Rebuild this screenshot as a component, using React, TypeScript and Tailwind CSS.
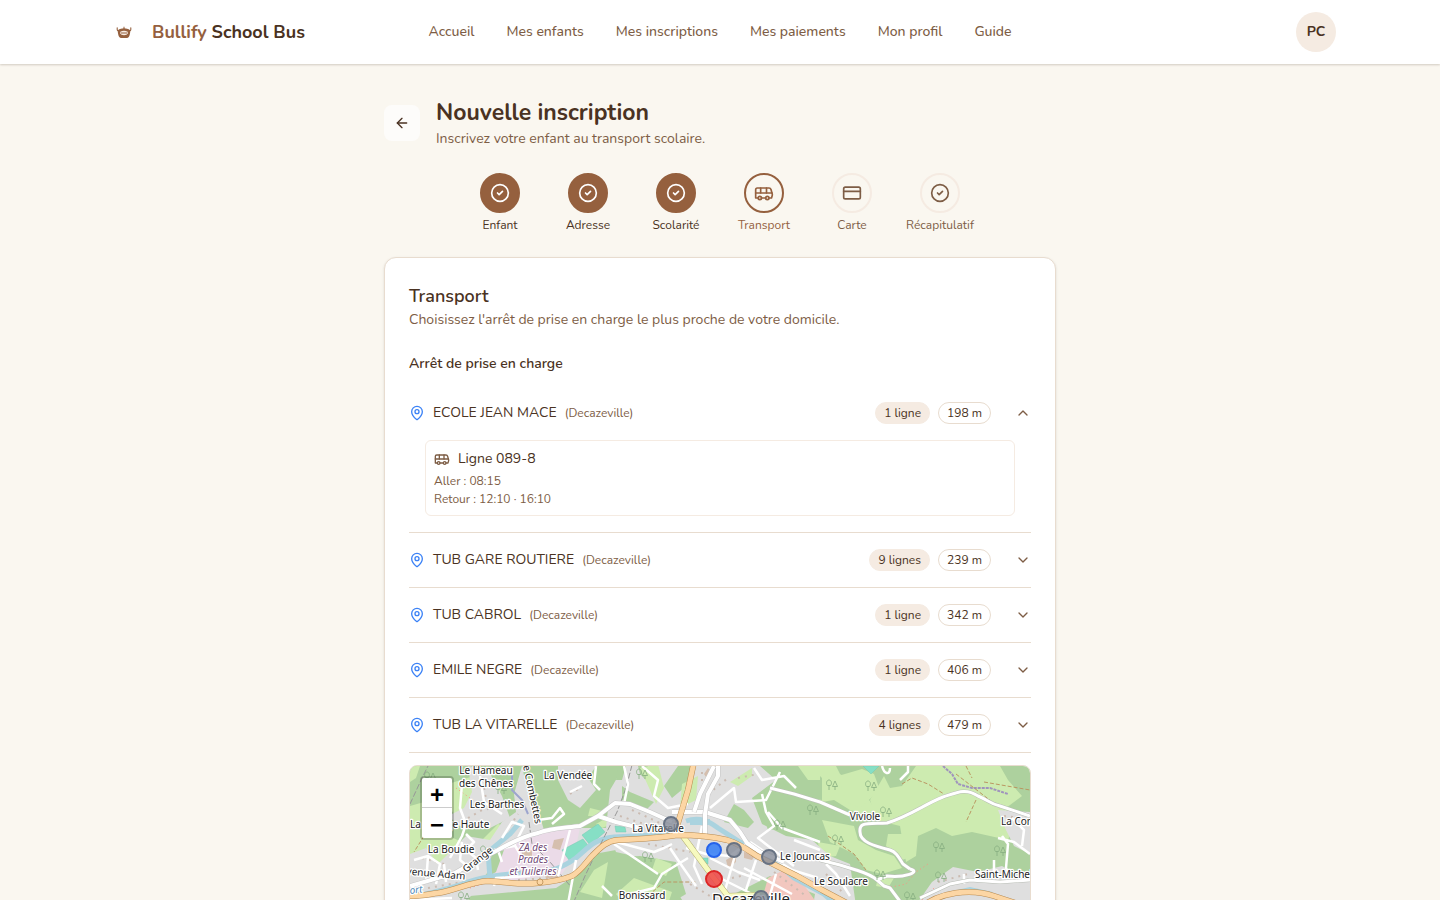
import { useState } from "react";
import { ArrowLeft, Bus, ChevronDown, CircleCheck, CreditCard, MapPin } from "lucide-react";

const navItems = ["Accueil", "Mes enfants", "Mes inscriptions", "Mes paiements", "Mon profil", "Guide"];

const steps = [
  { label: "Enfant", state: "done", Icon: CircleCheck },
  { label: "Adresse", state: "done", Icon: CircleCheck },
  { label: "Scolarité", state: "done", Icon: CircleCheck },
  { label: "Transport", state: "current", Icon: Bus },
  { label: "Carte", state: "todo", Icon: CreditCard },
  { label: "Récapitulatif", state: "todo", Icon: CircleCheck },
];

const circleStyles: Record<string, string> = {
  done: "border-[#95603e] bg-[#95603e] text-white",
  current: "border-[#95603e] text-[#95603e]",
  todo: "border-[#f5ebe2] text-[#7d5d45]",
};

const labelStyles: Record<string, string> = {
  done: "text-[#4a3222]",
  current: "text-[#95603e]",
  todo: "text-[#7d5d45]",
};

const stops = [
  { name: "ECOLE JEAN MACE", town: "Decazeville", lines: "1 ligne", distance: "198 m" },
  { name: "TUB GARE ROUTIERE", town: "Decazeville", lines: "9 lignes", distance: "239 m" },
  { name: "TUB CABROL", town: "Decazeville", lines: "1 ligne", distance: "342 m" },
  { name: "EMILE NEGRE", town: "Decazeville", lines: "1 ligne", distance: "406 m" },
  { name: "TUB LA VITARELLE", town: "Decazeville", lines: "4 lignes", distance: "479 m" },
];

const mainRoad = "M0 130C10 130 20 128 28 127C46 124 60 116 78 115C96 116 110 119 128 117C140 116 152 114 162 110C172 104 176 96 182 90C190 82 196 75 208 74C230 73 250 72 267 69C284 69 300 70 317 74C330 78 338 84 347 90L387 110L412 124L446 142M268 69V57L278 24L284 -4M510 142C530 126 560 122 584 130L620 142";
const connectors = "M0 120L45 107C60 98 74 91 88 84C102 76 114 70 128 67C140 62 154 62 170 60L188 50L205 37L220 38L240 46L262 56M188 50L206 56L230 62M262 46L295 46L320 54L330 66L337 77L350 86L374 96";
const ruralRoads = "M360 22L384 28L410 36L440 49M500 103L493 98C488 90 486 86 480 84C464 80 450 76 450 66C449 56 456 58 477 57C500 50 515 38 533 31C548 26 556 22 568 30C578 34 580 38 590 40L620 50M500 103C512 106 494 112 477 110L467 114C460 108 452 106 446 104L430 99L410 94M467 114L474 120L480 122L492 138M510 132L540 118L560 114L590 116L620 114";

function Logo() {
  return (
    <svg viewBox="0 0 16 14" className="h-3.5 w-4" aria-hidden="true">
      <path d="M1.200 2.700V4.500C1.200 5.400 1.800 5.800 2.600 5.500C4.200 4.200 6 3.900 8 3.900S11.800 4.200 13.400 5.500C14.200 5.800 14.800 5.400 14.800 4.500V2.700" fill="none" stroke="#95603e" strokeWidth="1.1" strokeLinecap="round" />
      <path d="M1.800 5.200C4 3.500 12 3.500 14.200 5.200C14.300 9 13.300 12.600 11 12.900H5C2.700 12.600 1.700 9 1.800 5.200Z" fill="#95603e" />
      <path d="M7.500 1.800h1v2.700h-1z" fill="#95603e" />
      <path d="M4.300 6.700Q8 5 11.700 6.700V8.500Q11.200 10.200 8 10.200T4.300 8.500Z" fill="#f7ebe2" />
      <path d="M5 8h6" stroke="#95603e" strokeWidth="1" />
    </svg>
  );
}

function TownMap() {
  return (
    <svg
      viewBox="0 0 620 280"
      preserveAspectRatio="xMidYMin slice"
      className="block h-[280px] w-full font-['Noto_Sans',sans-serif]"
      role="img"
      aria-label="Carte des arrêts autour de Decazeville"
    >
      <defs>
        <g id="trees" fill="none" stroke="#86ad80" strokeWidth="0.8">
          <path d="M3 10V5M1.500 5.500C-.5 3 1 0 3 0s3.500 3 1.500 5.500ZM9 10V6M9 1L6.500 6.500h5Z" />
        </g>
      </defs>
      <rect width="620" height="280" fill="#add19e" />

      {/* Open grassland */}
      <g fill="#cdebb0">
        <path d="M0 0H10L6 12L0 16ZM12 18L28 12L46 22L50 40L34 52L22 70L0 76V40L14 36Z" />
        <path d="M38 18L70 8L92 20L84 44L62 64L44 52Z" />
        <path d="M0 74L30 66L52 76L40 92L28 98L0 108Z" />
        <path d="M70 76L88 58L100 62L88 78L78 88Z" />
        <path d="M112 26L124 30L122 46L132 60L120 64L108 48Z" />
        <path d="M186 58L200 50L202 58L192 62Z" />
        <path d="M180 42L196 46L192 50L178 50Z" />
        <path d="M382 0H426L430 8L452 22L470 52L440 44L424 34L412 36L394 30L378 16Z" />
        <path d="M428 10L452 3L464 8L470 24L450 42L436 36Z" />
        <path d="M506 0H590L598 14L612 30L596 42L606 52L598 74L562 66L542 70L526 62L508 70L506 90L496 96L490 60L466 54L460 34L474 10L480 22L492 20Z" />
        <path d="M412 54L444 60L448 74L466 84L484 90L492 102L472 108L456 104L444 88L420 76Z" />
        <path d="M478 68H500L504 90L492 94L476 80Z" />
        <path d="M408 76L430 80L426 90L410 92ZM468 112L484 112L478 122L466 120Z" />
      </g>

      {/* Built-up areas */}
      <g fill="#dfdfdf">
        <path d="M58 0L78 4L92 30L100 52L80 62L50 60L38 50L54 42L62 26Z" />
        <path d="M112 0L118 28L128 44L134 64L108 76L96 86L82 100L58 134H0V88L16 82L28 98L56 70L80 74L92 56L106 46L104 28Z" />
        <path d="M148 0H186L178 12L186 24L170 42L158 34L148 14Z" />
        <path d="M200 24L214 0H350L366 14L342 32L352 58L376 70L402 74L420 90L440 98L446 140L420 134L360 110L300 140H276L258 112L232 92L206 86L196 62Z" />
        <path d="M196 62L212 70L206 84L184 88L168 108L146 122L60 130L72 112L102 92L134 66L160 62Z" />
        <path d="M410 98L430 105L442 134H404Z" />
        <path d="M508 136L522 116L543 101L568 106L592 100L620 116V150H508Z" />
        <path d="M588 44L620 46V88L604 80L596 64Z" />
      </g>
      <path d="M128 66L170 62L164 90L152 108L90 116L76 112L92 84Z" fill="#ebdbe8" />
      <g fill="#add19e">
        <path d="M228 0H238L236 14L230 8ZM212 20L220 26L244 36L234 46L212 34ZM208 0H216L212 14H206ZM268 0H284L274 22L262 32L254 20Z" />
        <path d="M324 38L334 44L344 56L338 62L314 56Z" />
        <path d="M352 46L382 36L402 44L412 38V72L392 72L374 62L358 64Z" />
        <path d="M372 0H400L412 12V34L388 30L370 14Z" />
        <path d="M200 92L230 90L266 96L276 128L256 140H188V104Z" />
        <path d="M168 112L184 90L198 88L190 138H164Z" />
        <path d="M82 88L94 84L86 106L76 112Z" />
      </g>
      <g fill="#cdebb0">
        <path d="M230 2L248 -2L254 22L246 38L240 24Z" />
        <path d="M272 18L288 10L286 34L270 42ZM320 16L342 2L342 10L328 20Z" />
        <path d="M388 0H410V14L398 14ZM206 128L224 112L262 126L258 138H214Z" />
        <path d="M246 92L262 98L256 110L242 104ZM170 126L184 104L198 96L192 132Z" />
      </g>
      <g fill="#86dfc5" stroke="#74cbb2" strokeWidth="0.5">
        <path d="M152 84L173 73L180 82L159 94Z" />
        <path d="M172 69L188 58L195 66L180 79Z" />
        <path d="M453 0H469L461 8Z" />
        <path d="M205 60L215 61L216 66L206 66ZM290 92H298V98L290 96Z" />
      </g>
      <path d="M358 112L374 104L392 116L406 136L396 150L366 138L354 126Z" fill="#f2c7bf" />

      {/* Buildings */}
      <g fill="none" stroke="#cbbbb1" strokeWidth="2" strokeDasharray="2 5">
        <path d="M58 52L72 44M18 122L64 114M100 60L108 48M108 114L138 112M158 10L172 12M222 44L252 58M238 78L280 86M298 28L318 12M330 76L358 98M364 106L396 130M528 116L558 108M594 50L612 52M416 108L432 126M74 22L78 44M12 92L34 98M160 28L170 22" />
        <path d="M280 118L300 130M322 112L340 108M210 50L240 60M292 6V26M328 12L348 8" />
      </g>
      <g fill="#d5bfae">
        <path d="M284 38L288 34L288 42ZM294 8L298 2L302 6L298 14ZM316 94L326 88V96L318 102ZM334 86L346 88L342 94L334 92ZM144 74L154 72L150 84L142 82ZM112 84H122V92H112ZM134 108L148 106V112H136Z" />
      </g>

      {/* Waterways */}
      <g fill="none" stroke="#aad3df">
        <path d="M0 131C20 128 34 124 50 119C70 110 94 108 124 106C140 106 152 102 166 92C178 82 184 73 204 71L264 68" strokeWidth="5" />
        <path d="M276 55C290 50 300 56 308 62L330 76C350 88 368 96 384 112L414 128L430 142M80 112L78 86L100 68L112 54" strokeWidth="5" />
        <path d="M280 56H300" strokeWidth="6" />
        <path d="M530 130L560 123L582 128" strokeWidth="4" />
      </g>
      <path d="M102 0V24L112 34L118 48" fill="none" stroke="#9da5ce" strokeWidth="2" />

      {/* Railway and field boundaries */}
      <path d="M222 -1L216 22L207 46L186 87L175 110L162 140M0 38L12 12L18 0M119 56L122 78L140 96L162 122" fill="none" stroke="#979797" strokeWidth="1" strokeDasharray="6 2" />
      <path d="M533 0L542 8L548 18L562 22H580L598 28" fill="none" stroke="#9f93bd" strokeWidth="2" strokeDasharray="3 1" />
      <g fill="none" stroke="#ba9662" strokeWidth="1" strokeDasharray="4 2">
        <path d="M418 70L444 88L456 104M492 18L502 12L518 18L534 28M556 0L562 12M546 8L590 42M574 16L620 24M210 140L240 128L254 116L286 116M566 34L556 56M14 70L4 86" />
      </g>
      <path d="M477 122L496 118L506 106L518 98M512 134L526 120M46 22L74 42M60 122L114 104" fill="none" stroke="#ff8f7f" strokeWidth="1" strokeDasharray="1 3" />

      {/* Local roads */}
      <g fill="none" stroke="#fff" strokeWidth="2.500" strokeLinejoin="round">
        <path d="M52 18L50 42L56 58L52 70M70 10L74 36L92 48M56 68L64 76L56 84L66 92L68 104M52 70L40 92M84 84L104 80L114 60L102 56L92 72M88 84L92 96M104 78L110 88M128 54L142 52L150 42L154 48L142 58M4 94L18 90L30 98L26 118M18 90L16 118M34 98L36 116M52 76L50 94L62 104M160 26L172 20M186 0L184 18L190 24" />
        <path d="M214 0L218 18L214 38M232 0L248 14L244 30L258 42L278 38M344 2L352 14L374 10L386 22M300 42L324 22L326 36L356 34L370 6M352 28L356 46L364 60L348 72L384 100M358 46L372 62L410 76M384 74L410 84M360 90L382 104L408 112M340 76L358 88" />
        <path d="M206 76L244 86L254 82L262 78M276 82L296 88L320 90L336 78M292 60L284 100L292 118M300 92L328 106L350 114M326 86L314 128M346 94L336 124M310 112L350 132M334 102L382 128M366 108L358 136M260 82L272 100L286 120M0 134L42 132M202 140L220 128L244 122L252 108L278 92M204 78L248 108M84 120L86 112L120 110M148 110L160 64" />
        <path d="M472 0C474 8 480 10 480 2M498 0L498 6L490 14M592 70L598 78L596 102L604 116M588 72L604 76L620 88M602 52L614 64L612 80M192 120L202 130M166 94L158 138M416 98L426 108L440 130M554 108V118M584 94V108" />
      </g>

      {/* Principal roads */}
      <g fill="none" strokeLinejoin="round">
        <path d={connectors} stroke="#c5c5c5" strokeWidth="5" />
        <path d={connectors} stroke="#fff" strokeWidth="4" />
        <path d={ruralRoads} stroke="#b8bdb5" strokeWidth="4" />
        <path d={ruralRoads} stroke="#fff" strokeWidth="3" />
        <path d="M308 -2V10L298 28L295 48V68M304 0L290 28L284 46" stroke="#c5c5c5" strokeWidth="5" />
        <path d="M308 -2V10L298 28L295 48V68M304 0L290 28L284 46" stroke="#fff" strokeWidth="4" />
        <path d="M272 69L303 111L318 130L350 129" stroke="#b1ad6d" strokeWidth="6" />
        <path d="M272 69L303 111L318 130L350 129" stroke="#f7fabf" strokeWidth="5" />
        <path d={mainRoad} stroke="#b98b50" strokeWidth="6" />
        <path d={mainRoad} stroke="#fcd6a4" strokeWidth="5" />
        <circle cx="130" cy="116" r="3" fill="#fcd6a4" stroke="#b98b50" strokeWidth="0.8" />
      </g>

      {[[14,6],[85,18],[226,3],[70,80],[416,14],[455,15],[470,41],[422,69],[523,76],[584,80],[525,106],[494,126],[364,54],[397,39],[232,86],[464,104],[48,126]].map(([x, y]) => (
        <use key={`${x}-${y}`} href="#trees" x={x} y={y} />
      ))}

      <g fontSize="10" fill="#222" stroke="#fff" strokeWidth="2.500" strokeLinejoin="round" paintOrder="stroke" textAnchor="middle">
        <text x="76" y="8">Le Hameau</text>
        <text x="76" y="21">des Chênes</text>
        <text x="158" y="13">La Vendée</text>
        <text x="87" y="42">Les Barthes</text>
        <text x="0" y="62" textAnchor="start">La Grange Haute</text>
        <text x="41" y="87">La Boudie</text>
        <text x="248" y="66">La Vitarelle</text>
        <text x="455" y="54">Viviole</text>
        <text x="591" y="59" textAnchor="start">La Combe</text>
        <text x="395" y="94">Le Jouncas</text>
        <text x="431" y="119">Le Soulacre</text>
        <text x="565" y="112" textAnchor="start">Saint-Michel</text>
        <text x="232" y="133">Bonissard</text>
        <text x="341" y="138" fontSize="15">Decazeville</text>
        <text x="-10" y="108" textAnchor="start" transform="rotate(5 -10 108)">Avenue Adam</text>
        <text x="56" y="107" textAnchor="start" transform="rotate(-38 56 107)">Grange</text>
        <text x="113" y="0" textAnchor="start" transform="rotate(78 113 0)">e Combettes</text>
        <g fill="#734a78" fontStyle="italic">
          <text x="123" y="85">ZA des</text>
          <text x="123" y="97">Prades</text>
          <text x="123" y="109">et Tuileries</text>
        </g>
        <text x="0" y="128" fill="#4a86b6" fontStyle="italic" textAnchor="start" transform="rotate(-7 0 128)">ort</text>
      </g>

      <g strokeWidth="2">
        {[[261,58],[324,84],[359,91],[351,132]].map(([x, y]) => (
          <circle key={`${x}-${y}`} cx={x} cy={y} r="7" fill="#858b98" fillOpacity="0.8" stroke="#687384" />
        ))}
        <circle cx="304" cy="84" r="7" fill="#3b82f6" fillOpacity="0.9" stroke="#2563eb" />
        <circle cx="304" cy="113" r="8" fill="#ef4444" fillOpacity="0.85" stroke="#dc2626" />
      </g>
    </svg>
  );
}

export default function App() {
  const [openStop, setOpenStop] = useState("ECOLE JEAN MACE");

  return (
    <div className="min-h-screen bg-[#faf7f0] font-['Nunito','Lato',sans-serif] text-[#4a3222]">
      <header className="bg-white shadow-[0_1px_2px_rgba(74,50,34,0.22)]">
        <div className="mx-auto grid h-16 max-w-[1232px] grid-cols-[1fr_auto_1fr] items-center">
          <a href="#" className="flex items-center gap-5 pl-3 text-lg font-bold">
            <Logo />
            <span><span className="text-[#95603e]">Bullify</span> School Bus</span>
          </a>
          <nav className="flex gap-8 text-sm font-medium text-[#7d5d45]">
            {navItems.map((item) => <a key={item} href="#">{item}</a>)}
          </nav>
          <button type="button" aria-label="Compte" className="flex size-10 items-center justify-center justify-self-end rounded-full bg-[#f5ebe2] text-sm font-bold">PC</button>
        </div>
      </header>

      <main className="mx-auto max-w-2xl pt-8 pb-8">
        <div className="flex items-center gap-4">
          <button type="button" aria-label="Retour" className="flex size-9 items-center justify-center rounded-lg bg-[#fdfcfa]">
            <ArrowLeft size={16} />
          </button>
          <div>
            <h1 className="text-[23px] leading-[33px] font-bold">Nouvelle inscription</h1>
            <p className="text-sm text-[#7d5d45]">Inscrivez votre enfant au transport scolaire.</p>
          </div>
        </div>

        <ol className="mt-6 flex justify-center gap-4">
          {steps.map(({ label, state, Icon }) => (
            <li key={label} className="flex w-18 flex-col items-center gap-1">
              <span className={`flex size-10 items-center justify-center rounded-full border-2 ${circleStyles[state]}`}><Icon size={20} /></span>
              <span className={`text-xs ${labelStyles[state]}`}>{label}</span>
            </li>
          ))}
        </ol>

        <section className="mt-6 rounded-xl border border-[#e8dccf] bg-white p-6 shadow-sm">
          <h2 className="text-lg font-semibold">Transport</h2>
          <p className="text-sm text-[#7d5d45]">Choisissez l'arrêt de prise en charge le plus proche de votre domicile.</p>
          <h3 className="mt-6 text-sm font-semibold">Arrêt de prise en charge</h3>

          <div className="mt-3 mb-3">
            {stops.map((stop) => {
              const open = stop.name === openStop;
              return (
                <div key={stop.name} className="border-b border-[#e8dccf]">
                  <button type="button" aria-expanded={open} onClick={() => setOpenStop(open ? "" : stop.name)} className="flex h-[54px] w-full items-center text-left">
                    <MapPin size={16} className="mr-2 text-[#3b82f6]" />
                    <span className="text-sm">{stop.name}</span>
                    <span className="ml-2 text-xs text-[#7d5d45]">({stop.town})</span>
                    <span className="ml-auto rounded-full border border-[#f5ebe2] bg-[#f5ebe2] px-2 py-0.5 text-xs">{stop.lines}</span>
                    <span className="ml-2 rounded-full border border-[#e8dccf] px-2 py-0.5 text-xs">{stop.distance}</span>
                    <ChevronDown size={16} className={`ml-6 text-[#7d5d45] ${open ? "rotate-180" : ""}`} />
                  </button>
                  {open && (
                    <div className="mx-4 mb-4 rounded-md border border-[#f5ebe2] p-2">
                      <p className="flex items-center gap-2 text-sm"><Bus size={16} className="text-[#7d5d45]" />Ligne 089-8</p>
                      <div className="mt-1 space-y-0.5 text-xs text-[#7d5d45]">
                        <p>Aller : 08:15</p>
                        <p>Retour : 12:10 · 16:10</p>
                      </div>
                    </div>
                  )}
                </div>
              );
            })}
          </div>

          <div className="relative overflow-hidden rounded-lg border border-[#e8dccf]">
            <TownMap />
            <div className="absolute top-2.5 left-2.5 flex flex-col overflow-hidden rounded border-2 border-black/20 bg-clip-padding font-['Liberation_Sans',sans-serif] text-2xl font-bold text-black">
              <button type="button" aria-label="Zoom avant" className="flex size-[30px] items-center justify-center border-b border-[#ccc] bg-white pt-1">+</button>
              <button type="button" aria-label="Zoom arrière" className="flex size-[30px] items-center justify-center bg-white pt-1">−</button>
            </div>
          </div>
        </section>
      </main>
    </div>
  );
}
